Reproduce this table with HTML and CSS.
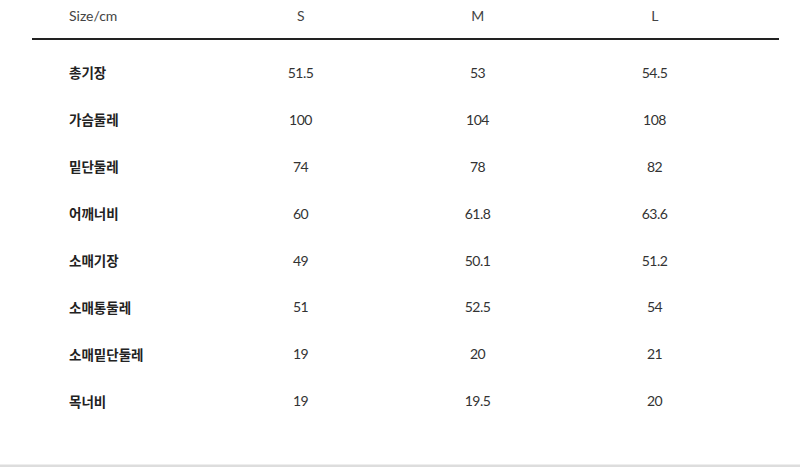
FILE: index.html
```html
<!DOCTYPE html>
<html lang="ko">
<head>
<meta charset="utf-8">
<link rel="stylesheet" href="styles.css">
</head>
<body>
<div class="page">
  <div class="size-table">
    <div class="row head">
      <div class="cell label">Size/cm</div>
      <div class="cell">S</div>
      <div class="cell">M</div>
      <div class="cell">L</div>
    </div>
    <div class="body">
      <div class="row"><div class="cell label">총기장</div><div class="cell">51.5</div><div class="cell">53</div><div class="cell">54.5</div></div>
      <div class="row"><div class="cell label">가슴둘레</div><div class="cell">100</div><div class="cell">104</div><div class="cell">108</div></div>
      <div class="row"><div class="cell label">밑단둘레</div><div class="cell">74</div><div class="cell">78</div><div class="cell">82</div></div>
      <div class="row"><div class="cell label">어깨너비</div><div class="cell">60</div><div class="cell">61.8</div><div class="cell">63.6</div></div>
      <div class="row"><div class="cell label">소매기장</div><div class="cell">49</div><div class="cell">50.1</div><div class="cell">51.2</div></div>
      <div class="row"><div class="cell label">소매통둘레</div><div class="cell">51</div><div class="cell">52.5</div><div class="cell">54</div></div>
      <div class="row"><div class="cell label">소매밑단둘레</div><div class="cell">19</div><div class="cell">20</div><div class="cell">21</div></div>
      <div class="row"><div class="cell label">목너비</div><div class="cell">19</div><div class="cell">19.5</div><div class="cell">20</div></div>
    </div>
  </div>
  <div class="footer-line"></div>
</div>
</body>
</html>
```
FILE: styles.css
```css
html, body {
  margin: 0;
  padding: 0;
  background: #fff;
}
body {
  font-family: Lato, "Noto Sans CJK KR", sans-serif;
  color: #333;
  font-size: 14px;
}
.page {
  width: 800px;
  height: 473px;
  display: flex;
  flex-direction: column;
}
.size-table {
  margin: 0 21px 0 32px;
  height: 464px;
}
.row {
  display: grid;
  grid-template-columns: 180px 177px 177px 177px 1fr;
  align-items: center;
}
.head {
  height: 30px;
  padding-bottom: 8px;
  border-bottom: 2px solid #222;
}
.head .cell {
  color: #444;
  font-size: 14px;
}
.body {
  padding-top: 9px;
}
.body .row {
  height: 46.9px;
}
.cell {
  text-align: center;
  letter-spacing: -0.5px;
}
.cell.label {
  text-align: left;
  padding-left: 37px;
  letter-spacing: 0;
}
.body .label {
  font-family: "Noto Sans CJK KR", sans-serif;
  font-weight: 700;
  color: #222;
  font-size: 13.5px;
}
.footer-line {
  height: 2px;
  background: #ddd;
  border-top: 1px solid #eee;
}
```
